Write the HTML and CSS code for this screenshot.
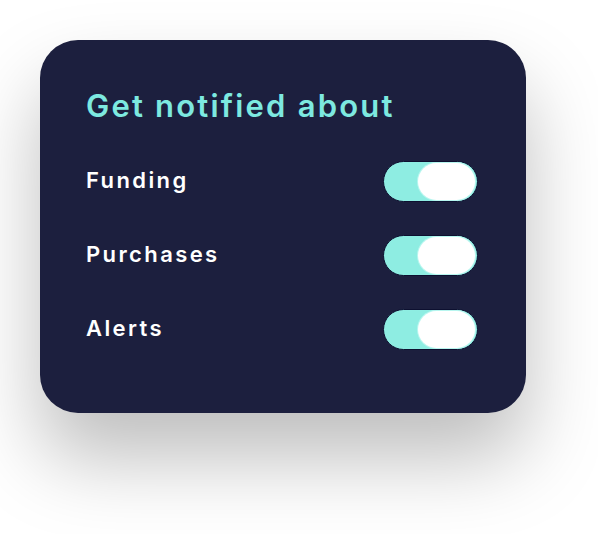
FILE: index.html
```html
<!DOCTYPE html>
<html>
<head>
<meta charset="utf-8">
<link rel="stylesheet" href="styles.css">
</head>
<body>
<div class="card">
  <h1 class="title">Get notified about</h1>
  <div class="list">
    <div class="row"><span class="label">Funding</span><span class="toggle"><span class="thumb"></span></span></div>
    <div class="row"><span class="label">Purchases</span><span class="toggle"><span class="thumb"></span></span></div>
    <div class="row"><span class="label">Alerts</span><span class="toggle"><span class="thumb"></span></span></div>
  </div>
</div>
</body>
</html>
```
FILE: styles.css
```css
html, body {
  margin: 0;
  padding: 0;
  background: #ffffff;
}
body {
  width: 598px;
  height: 534px;
  padding: 40px 0 0 40px;
  box-sizing: border-box;
  font-family: Inter, "Noto Sans", sans-serif;
}
.card {
  width: 486px;
  height: 373px;
  box-sizing: border-box;
  background: #1c1f3e;
  border-radius: 38px;
  padding: 46px 48px 0 46px;
  box-shadow: 0 45px 80px rgba(0, 0, 0, 0.26);
}
.title {
  margin: 0 0 35px 0;
  font-size: 31px;
  line-height: 40px;
  font-weight: 600;
  color: #7de9e0;
  letter-spacing: 2.2px;
}
.list {
  display: flex;
  flex-direction: column;
  gap: 33px;
}
.row {
  display: flex;
  align-items: center;
  justify-content: space-between;
  height: 41px;
}
.label {
  color: #ffffff;
  font-size: 22px;
  font-weight: 600;
  letter-spacing: 2.4px;
  padding-bottom: 3px;
}
.toggle {
  width: 95px;
  height: 41px;
  box-sizing: border-box;
  border: 1px solid #0d1030;
  border-radius: 21px;
  background: #8eede2;
  display: flex;
  align-items: center;
  justify-content: flex-end;
  padding-right: 2px;
}
.thumb {
  width: 57px;
  height: 37px;
  border-radius: 19px;
  background: #ffffff;
  box-shadow: 0 0 0 1px #b8f6ef;
}
```
